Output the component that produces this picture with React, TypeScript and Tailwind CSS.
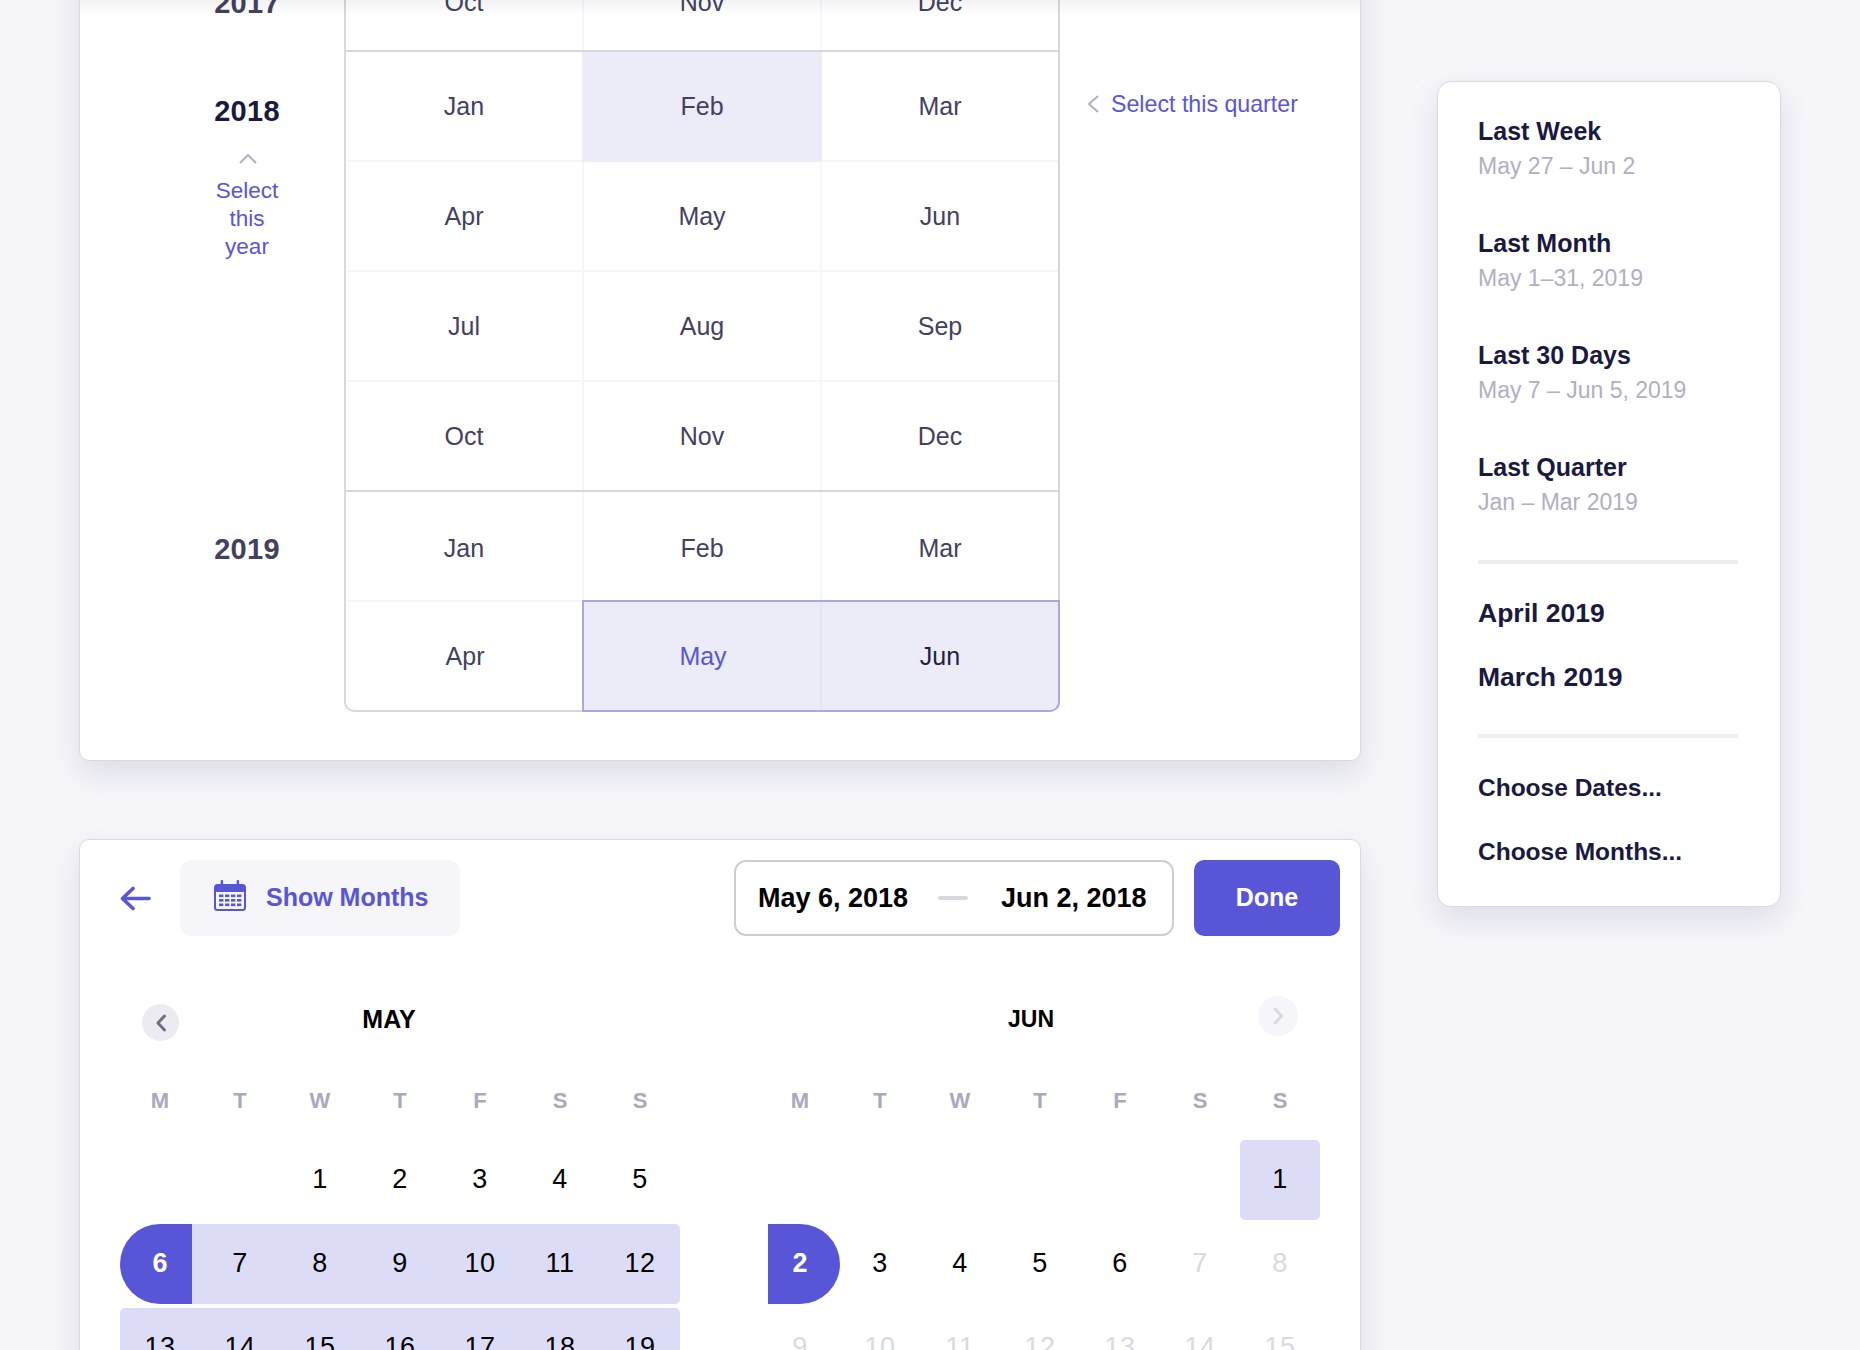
const rowLine = 'border-[#f5f5fa]'

function MonthCell({ label, className = '' }: { label: string; className?: string }) {
  return <div className={`flex items-center justify-center text-[25px] text-[#43415f] ${className}`}>{label}</div>
}

function Chevron({ d, className, width, height, box }: { d: string; className: string; width: number; height: number; box: string }) {
  return (
    <svg width={width} height={height} viewBox={box} fill="none" stroke="currentColor" strokeWidth="2" className={className}>
      <path d={d} />
    </svg>
  )
}

function YearCard() {
  return (
    <div className="rounded-[10px] border border-[#d9d9e1] bg-white shadow-[0_12px_30px_rgba(30,30,70,0.11)] pb-[48px]">
      {/* 2017, only the tail is on screen */}
      <div className="flex">
        <div className="w-[264px] pl-[129px] pt-[50px]">
          <div className="w-[76px] text-center text-[29px] tracking-[0.3px] leading-[36px] font-bold text-[#43415f]">2017</div>
        </div>
        <div className="w-[716px] border-x-2 border-[#d7d7de] grid grid-cols-[238px_238px_236px]">
          <MonthCell label="Oct" className={`h-[115px] pt-[21px] border-r-2 ${rowLine}`} />
          <MonthCell label="Nov" className={`h-[115px] pt-[21px] border-r-2 ${rowLine}`} />
          <MonthCell label="Dec" className="h-[115px] pt-[21px]" />
        </div>
      </div>

      {/* 2018 */}
      <div className="flex">
        <div className="w-[264px] pl-[129px] pt-[43px]">
          <div className="w-[76px] flex flex-col items-center text-center">
            <div className="text-[29px] tracking-[0.3px] leading-[36px] font-bold text-[#1a1a40]">2018</div>
            <Chevron d="M1 9 L9 1 L17 9" width={18} height={10} box="0 0 18 10" className="mt-[25px] ml-[1px] text-[#b0afc2]" />
            <div className="mt-[13px] text-[22.5px] leading-[28px] text-[#5856d6]">Select this year</div>
          </div>
        </div>
        <div className="w-[716px] border-x-2 border-t-2 border-[#d7d7de] grid grid-cols-[238px_238px_236px]">
          <MonthCell label="Jan" className={`h-[110px] pt-[2px] border-r-2 border-b-2 ${rowLine}`} />
          <MonthCell label="Feb" className="h-[110px] -ml-[2px] bg-[#ecebf8]" />
          <MonthCell label="Mar" className={`h-[110px] pt-[2px] border-b-2 ${rowLine}`} />
          <MonthCell label="Apr" className={`h-[110px] pt-[2px] border-r-2 border-b-2 ${rowLine}`} />
          <MonthCell label="May" className={`h-[110px] pt-[2px] border-r-2 border-b-2 ${rowLine}`} />
          <MonthCell label="Jun" className={`h-[110px] pt-[2px] border-b-2 ${rowLine}`} />
          <MonthCell label="Jul" className={`h-[110px] pt-[2px] border-r-2 border-b-2 ${rowLine}`} />
          <MonthCell label="Aug" className={`h-[110px] pt-[2px] border-r-2 border-b-2 ${rowLine}`} />
          <MonthCell label="Sep" className={`h-[110px] pt-[2px] border-b-2 ${rowLine}`} />
          <MonthCell label="Oct" className={`h-[108px] pt-[2px] border-r-2 ${rowLine}`} />
          <MonthCell label="Nov" className={`h-[108px] pt-[2px] border-r-2 ${rowLine}`} />
          <MonthCell label="Dec" className="h-[108px] pt-[2px]" />
        </div>
        <div className="pl-[27px] pt-[40px]">
          <div className="flex items-center gap-[13px] text-[23.2px] leading-[28px] text-[#5856d6]">
            <Chevron d="M11 1 L2 9 L11 17" width={12} height={18} box="0 0 12 18" className="text-[#b0afc2]" />
            <span className="-ml-[1px]">Select this quarter</span>
          </div>
        </div>
      </div>

      {/* 2019 */}
      <div className="flex">
        <div className="w-[264px] pl-[129px] pt-[41px]">
          <div className="w-[76px] text-center text-[29px] tracking-[0.3px] leading-[36px] font-bold text-[#43415f]">2019</div>
        </div>
        <div className="w-[716px] border-2 border-[#d7d7de] rounded-b-[10px] grid grid-cols-[238px_238px_236px]">
          <MonthCell label="Jan" className={`h-[110px] pt-[6px] border-r-2 border-b-2 ${rowLine}`} />
          <MonthCell label="Feb" className={`h-[110px] pt-[6px] border-r-2 border-b-2 ${rowLine}`} />
          <MonthCell label="Mar" className={`h-[110px] pt-[6px] border-b-2 ${rowLine}`} />
          <MonthCell label="Apr" className="h-[108px] pt-[2px]" />
          <div className="-ml-[2px] -mt-[2px] -mb-[2px] pt-[2px] flex items-center justify-center bg-[#ecebf8] border-y-2 border-l-2 border-[#a9a7e6] text-[25px] text-[#5856d6] relative">
            May
            <div className="absolute right-0 inset-y-0 w-[2px] bg-[#e4e4f3]" />
          </div>
          <div className="-mr-[2px] -mt-[2px] -mb-[2px] pt-[2px] flex items-center justify-center bg-[#ecebf8] border-y-2 border-r-2 border-[#a9a7e6] rounded-br-[10px] text-[25px] text-[#1f1f45]">
            Jun
          </div>
        </div>
      </div>
    </div>
  )
}

function BackArrow() {
  return (
    <svg width="31" height="25" viewBox="0 0 31 25" fill="none" stroke="#5856d6" strokeWidth="3.6" strokeLinecap="round" strokeLinejoin="round">
      <path d="M29 12.5H3" />
      <path d="M13 2.5 L2.5 12.5 L13 22.5" />
    </svg>
  )
}

function CalendarIcon() {
  const cols = [5, 11, 17, 23]
  const rows = [14.5, 19, 23.5]
  return (
    <svg width="32" height="31" viewBox="0 0 32 31" className="-mt-[5px]">
      <rect x="6.7" y="0" width="2.4" height="6" rx="1" fill="#5856d6" />
      <rect x="22.7" y="0" width="2.4" height="6" rx="1" fill="#5856d6" />
      <rect x="1" y="5" width="30" height="25" rx="2.5" fill="none" stroke="#5856d6" strokeWidth="2" />
      <rect x="1" y="5" width="30" height="7" rx="2" fill="#5856d6" />
      {rows.map((y) => cols.map((x) => <rect key={`${x}-${y}`} x={x} y={y} width="4.4" height="2.6" fill="#5856d6" />))}
    </svg>
  )
}

const weekDays = ['M', 'T', 'W', 'T', 'F', 'S', 'S']

function WeekHeader() {
  return (
    <div className="grid grid-cols-7 h-[80px] items-center text-center text-[22px] font-bold text-[#aaa9bc]">
      {weekDays.map((d, i) => (
        <div key={i}>{d}</div>
      ))}
    </div>
  )
}

type DayKind = 'plain' | 'range' | 'muted' | 'empty'

function Day({ value, kind = 'plain', rounded = '' }: { value?: number; kind?: DayKind; rounded?: string }) {
  const color = kind === 'muted' ? 'text-[#d9d9e0]' : 'text-black'
  const bg = kind === 'range' ? 'bg-[#dddcf7]' : ''
  return <div className={`h-[80px] pb-[2px] flex items-center justify-center text-[27px] tracking-[0.5px] ${color} ${bg} ${rounded}`}>{value}</div>
}

function RangeCard() {
  return (
    <div className="mt-[78px] rounded-t-[10px] border border-[#d9d9e1] bg-white shadow-[0_12px_30px_rgba(30,30,70,0.11)] pt-[20px]">
      <div className="flex items-center pl-[40px] pr-[20px]">
        <BackArrow />
        <div className="ml-[29px] w-[280px] h-[76px] rounded-[12px] bg-[#f5f5fa] flex items-center pl-[34px] gap-[20px] text-[25px] font-bold text-[#5856d6]">
          <CalendarIcon />
          Show Months
        </div>
        <div className="ml-auto w-[440px] h-[76px] rounded-[12px] border-2 border-[#cdcdd5] flex items-center pl-[22px] text-[27px] font-bold text-black">
          <span className="w-[152px] whitespace-nowrap">May 6, 2018</span>
          <span className="ml-[28px] w-[30px] h-[4px] rounded-full bg-[#d8d8e0]" />
          <span className="ml-[33px] whitespace-nowrap">Jun 2, 2018</span>
        </div>
        <div className="ml-[20px] w-[146px] h-[76px] rounded-[10px] bg-[#5856d6] flex items-center justify-center text-[25px] font-bold text-white">
          Done
        </div>
      </div>

      <div className="mt-[60px] pl-[40px] flex gap-[80px]">
        {/* May */}
        <div className="w-[560px]">
          <div className="flex h-[64px] items-start">
            <div className="ml-[22px] mt-[8px] w-[37px] h-[37px] rounded-full bg-[#ecebf2] flex items-center justify-center">
              <svg width="12" height="18" viewBox="0 0 12 18" fill="none" stroke="#6f6e85" strokeWidth="3" strokeLinecap="round" strokeLinejoin="round">
                <path d="M9.5 2 L3 9 L9.5 16" />
              </svg>
            </div>
            <div className="w-[420px] text-center text-[25px] leading-[46px] font-bold text-black">MAY</div>
          </div>
          <WeekHeader />
          <div className="grid grid-cols-7 gap-y-[4px]">
            <Day kind="empty" />
            <Day kind="empty" />
            <Day value={1} />
            <Day value={2} />
            <Day value={3} />
            <Day value={4} />
            <Day value={5} />
            <div className="relative h-[80px] pb-[2px] flex items-center justify-center text-[27px] font-bold text-white bg-[linear-gradient(90deg,transparent_72px,#dddcf7_72px)]">
              <div className="absolute left-0 inset-y-0 w-[72px] rounded-l-[40px] bg-[#5856d6]" />
              <span className="relative">6</span>
            </div>
            <Day value={7} kind="range" />
            <Day value={8} kind="range" />
            <Day value={9} kind="range" />
            <Day value={10} kind="range" />
            <Day value={11} kind="range" />
            <Day value={12} kind="range" rounded="rounded-r-[5px]" />
            <Day value={13} kind="range" rounded="rounded-l-[5px]" />
            <Day value={14} kind="range" />
            <Day value={15} kind="range" />
            <Day value={16} kind="range" />
            <Day value={17} kind="range" />
            <Day value={18} kind="range" />
            <Day value={19} kind="range" rounded="rounded-r-[5px]" />
          </div>
        </div>

        {/* Jun */}
        <div className="w-[560px]">
          <div className="flex h-[64px] items-start">
            <div className="ml-[221px] w-[100px] text-center text-[23px] leading-[46px] font-bold text-black">JUN</div>
            <div className="ml-[177px] w-[40px] h-[40px] rounded-full bg-[#f5f5fa] flex items-center justify-center">
              <svg width="12" height="18" viewBox="0 0 12 18" fill="none" stroke="#d8d8e0" strokeWidth="3" strokeLinecap="round" strokeLinejoin="round">
                <path d="M3 2 L9.5 9 L3 16" />
              </svg>
            </div>
          </div>
          <WeekHeader />
          <div className="grid grid-cols-7 gap-y-[4px]">
            <Day kind="empty" />
            <Day kind="empty" />
            <Day kind="empty" />
            <Day kind="empty" />
            <Day kind="empty" />
            <Day kind="empty" />
            <Day value={1} kind="range" rounded="rounded-[5px]" />
            <div className="relative h-[80px] pb-[2px] flex items-center justify-center text-[27px] font-bold text-white">
              <div className="absolute left-[8px] inset-y-0 w-[72px] rounded-r-[40px] bg-[#5856d6]" />
              <span className="relative">2</span>
            </div>
            <Day value={3} />
            <Day value={4} />
            <Day value={5} />
            <Day value={6} />
            <Day value={7} kind="muted" />
            <Day value={8} kind="muted" />
            {[9, 10, 11, 12, 13, 14, 15].map((n) => (
              <Day key={n} value={n} kind="muted" />
            ))}
          </div>
        </div>
      </div>
    </div>
  )
}

const presets = [
  { title: 'Last Week', range: 'May 27 – Jun 2' },
  { title: 'Last Month', range: 'May 1–31, 2019' },
  { title: 'Last 30 Days', range: 'May 7 – Jun 5, 2019' },
  { title: 'Last Quarter', range: 'Jan – Mar 2019' },
]

function PresetMenu() {
  return (
    <div className="ml-[76px] mt-[81px] w-[344px] rounded-[14px] border border-[#d9d9e1] bg-white shadow-[0_12px_30px_rgba(30,30,70,0.11)] pl-[40px] pr-[42px] pt-[31px] pb-[36px] text-[25px] leading-[36px] font-bold text-[#1a1a40]">
      <div className="flex flex-col gap-[41px]">
        {presets.map((p) => (
          <div key={p.title}>
            <div>{p.title}</div>
            <div className="-mt-[1px] text-[23px] font-normal text-[#b0afc2]">{p.range}</div>
          </div>
        ))}
      </div>
      <div className="mt-[40px] h-[4px] bg-[#ededf2]" />
      <div className="mt-[31px] flex flex-col gap-[28px] text-[26.5px]">
        <div>April 2019</div>
        <div>March 2019</div>
      </div>
      <div className="mt-[39px] h-[4px] bg-[#ededf2]" />
      <div className="mt-[32px] flex flex-col gap-[28px] text-[24.5px]">
        <div>Choose Dates...</div>
        <div>Choose Months...</div>
      </div>
    </div>
  )
}

export default function App() {
  return (
    <div className="relative w-[1860px] h-[1350px] overflow-hidden bg-[#f5f5fa] flex items-start [font-family:'Liberation_Sans',Arial,sans-serif]">
      <div className="ml-[79px] -mt-[66px] w-[1282px] shrink-0">
        <YearCard />
        <RangeCard />
      </div>
      <PresetMenu />
      {/* shade at the top edge of the card, where it has scrolled out of view */}
      <div className="absolute top-0 left-[80px] w-[1280px] h-[15px] bg-gradient-to-b from-[#0000000d] to-transparent" />
    </div>
  )
}
